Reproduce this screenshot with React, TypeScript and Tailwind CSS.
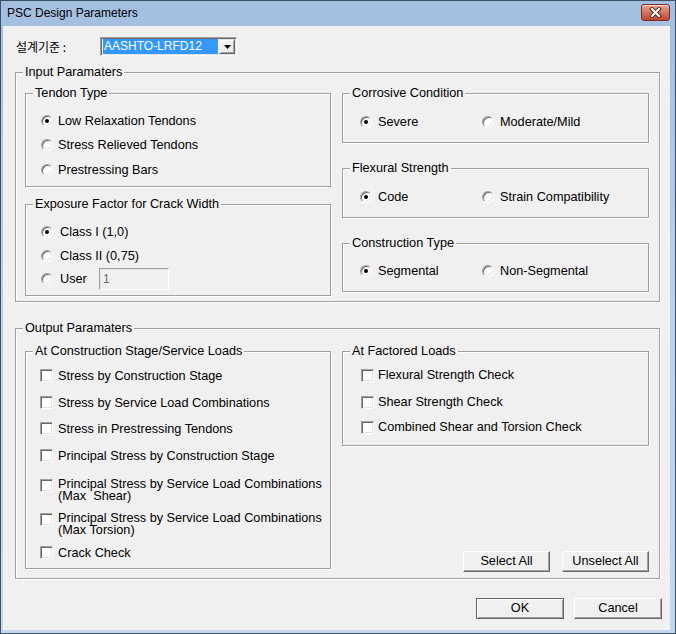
import React from 'react';

function Radio({ checked = false }: { checked?: boolean }) {
  return (
    <div className="w-[12px] h-[12px] shrink-0 rounded-full border border-t-[#a0a0a0] border-l-[#a0a0a0] border-r-white border-b-white bg-white shadow-[inset_1px_1px_0_#696969,inset_-1px_-1px_0_#e3e3e3] flex items-center justify-center">
      {checked && <div className="w-[4px] h-[4px] rounded-full bg-black" />}
    </div>
  );
}

function Check() {
  return (
    <div className="w-[13px] h-[13px] shrink-0 border border-t-[#a0a0a0] border-l-[#a0a0a0] border-r-white border-b-white bg-white shadow-[inset_1px_1px_0_#696969,inset_-1px_-1px_0_#e3e3e3]" />
  );
}

function Group({ label, className = '', children }: { label: string; className?: string; children?: React.ReactNode }) {
  return (
    <div className={`border border-[#a0a0a0] shadow-[inset_1px_1px_0_#fff,1px_1px_0_#fff] ${className}`}>
      <div className="-mt-[8px] ml-[7px] w-fit px-[2px] leading-[14px] bg-[#f0f0f0]">{label}</div>
      {children}
    </div>
  );
}

function Btn({ label, width, primary = false, className = '' }: { label: string; width: string; primary?: boolean; className?: string }) {
  return (
    <div
      className={`${width} h-[21px] flex items-center justify-center bg-[#f0f0f0] leading-none ${
        primary
          ? 'border border-[#646464] shadow-[inset_1px_1px_0_#fff,inset_-1px_-1px_0_#a0a0a0]'
          : 'border border-t-white border-l-white border-r-[#696969] border-b-[#696969] shadow-[inset_-1px_-1px_0_#a0a0a0]'
      } ${className}`}
    >
      {label}
    </div>
  );
}

const tendons = [
  { label: 'Low Relaxation Tendons', on: true, mt: 'mt-[13px]' },
  { label: 'Stress Relieved Tendons', on: false, mt: 'mt-[8px]' },
  { label: 'Prestressing Bars', on: false, mt: 'mt-[9px]' },
];

const pairs = [
  { title: 'Corrosive Condition', a: 'Severe', b: 'Moderate/Mild', box: 'h-[50px]', mt: 'mt-[14px]' },
  { title: 'Flexural Strength', a: 'Code', b: 'Strain Compatibility', box: 'mt-[25px] h-[50px]', mt: 'mt-[14px]' },
  { title: 'Construction Type', a: 'Segmental', b: 'Non-Segmental', box: 'mt-[25px] h-[49px]', mt: 'mt-[13px]' },
];

const stageChecks = [
  { lines: ['Stress by Construction Stage'], mt: 'mt-[10px]' },
  { lines: ['Stress by Service Load Combinations'], mt: 'mt-[11px]' },
  { lines: ['Stress in Prestressing Tendons'], mt: 'mt-[10px]' },
  { lines: ['Principal Stress by Construction Stage'], mt: 'mt-[11px]' },
  { lines: ['Principal Stress by Service Load Combinations', '(Max  Shear)'], mt: 'mt-[14px]' },
  { lines: ['Principal Stress by Service Load Combinations', '(Max Torsion)'], mt: 'mt-[10px]' },
  { lines: ['Crack Check'], mt: 'mt-[9px]' },
];

const factoredChecks = [
  { label: 'Flexural Strength Check', mt: 'mt-[9px]' },
  { label: 'Shear Strength Check', mt: 'mt-[11px]' },
  { label: 'Combined Shear and Torsion Check', mt: 'mt-[9px]' },
];

export default function App() {
  return (
    <div className="w-[676px] h-[634px] flex flex-col border border-[#3d4f66] bg-gradient-to-b from-[#a3bedf] via-[#bcd2ec] to-[#c3d7ee] font-['Liberation_Sans',Arial,sans-serif] text-black">
      {/* Title bar */}
      <div className="h-[25px] shrink-0 flex items-start justify-between pl-[6px] pr-[5px]">
        <span className="mt-[5px] text-[12px] leading-[15px]">PSC Design Parameters</span>
        <div className="mt-[3px] w-[29px] h-[17px] rounded-[3px] border border-[#7a3027] bg-gradient-to-b from-[#e9a897] via-[#d27660] to-[#c0452e] shadow-[inset_0_1px_0_rgba(255,255,255,0.5)] flex items-center justify-center">
          <svg width="13" height="11" viewBox="0 0 13 11">
            <path d="M3 2 L10 9 M10 2 L3 9" stroke="#5a2a24" strokeWidth="4" strokeLinecap="square" />
            <path d="M3 2 L10 9 M10 2 L3 9" stroke="#ffffff" strokeWidth="2" strokeLinecap="square" />
          </svg>
        </div>
      </div>

      {/* Client */}
      <div className="flex-1 ml-[2px] mr-[5px] mb-[3px] bg-[#f0f0f0] text-[12.7px] leading-[16px] flex flex-col">
        <div className="flex items-center mt-[11px] ml-[13px] h-[19px]">
          <span className="w-[84px] font-['Noto_Sans_CJK_KR',sans-serif] text-[12px]">설계기준 :</span>
          <div className="w-[137px] h-[19px] flex border border-t-[#a0a0a0] border-l-[#a0a0a0] border-r-white border-b-white bg-white shadow-[inset_1px_1px_0_#696969,inset_-1px_-1px_0_#e3e3e3] p-[1px] pl-[2px]">
            <div className="flex-1 mr-[1px] bg-[#3399ff] text-white text-[12px] leading-[15px] pl-[1px]">AASHTO-LRFD12</div>
            <div className="w-[16px] h-[15px] bg-[#f0f0f0] border border-t-[#e3e3e3] border-l-[#e3e3e3] border-r-[#696969] border-b-[#696969] shadow-[inset_1px_1px_0_#fff,inset_-1px_-1px_0_#a0a0a0] flex items-center justify-center">
              <svg width="7" height="4" viewBox="0 0 7 4">
                <path d="M0 0 H7 L3.5 4 Z" fill="#000" />
              </svg>
            </div>
          </div>
        </div>

        {/* Input */}
        <Group label="Input Paramaters" className="mt-[16px] ml-[12px] w-[645px] h-[230px]">
          <div className="flex mt-[14px] ml-[9px] gap-[11px]">
            <div className="flex flex-col">
              <Group label="Tendon Type" className="w-[306px] h-[94px]">
                {tendons.map(t => (
                  <div key={t.label} className={`flex items-center h-[16px] gap-[5px] pl-[15px] ${t.mt}`}>
                    <Radio checked={t.on} />
                    <span>{t.label}</span>
                  </div>
                ))}
              </Group>
              <Group label="Exposure Factor for Crack Width" className="mt-[17px] w-[306px] h-[92px]">
                <div className="flex items-center h-[16px] gap-[7px] pl-[15px] mt-[13px]">
                  <Radio checked />
                  <span>Class I (1,0)</span>
                </div>
                <div className="flex items-center h-[16px] gap-[7px] pl-[15px] mt-[8px]">
                  <Radio />
                  <span>Class II (0,75)</span>
                </div>
                <div className="flex items-center h-[16px] pl-[15px] mt-[7px]">
                  <Radio />
                  <span className="w-[46px] pl-[7px]">User</span>
                  <div className="w-[70px] h-[22px] shrink-0 border border-t-[#a0a0a0] border-l-[#a0a0a0] border-r-white border-b-white shadow-[inset_1px_1px_0_#e3e3e3] pl-[3px] pt-[2px] text-[#6d6d6d] text-[12px]">
                    1
                  </div>
                </div>
              </Group>
            </div>
            <div className="flex flex-col">
              {pairs.map(p => (
                <Group key={p.title} label={p.title} className={`w-[307px] ${p.box}`}>
                  <div className={`flex items-center h-[16px] pl-[17px] ${p.mt}`}>
                    <div className="w-[122px] flex items-center gap-[6px]">
                      <Radio checked />
                      <span>{p.a}</span>
                    </div>
                    <div className="flex items-center gap-[6px]">
                      <Radio />
                      <span>{p.b}</span>
                    </div>
                  </div>
                </Group>
              ))}
            </div>
          </div>
        </Group>

        {/* Output */}
        <Group label="Output Paramaters" className="mt-[26px] ml-[12px] w-[645px] h-[251px]">
          <div className="flex mt-[16px] ml-[9px] gap-[11px]">
            <Group label="At Construction Stage/Service Loads" className="w-[306px] h-[218px]">
              {stageChecks.map((c, i) => (
                <div key={i} className={`flex items-start gap-[5px] pl-[14px] ${c.mt}`}>
                  <div className="mt-[1px]">
                    <Check />
                  </div>
                  <div className={c.lines.length > 1 ? 'leading-[12px]' : 'leading-[16px]'}>
                    {c.lines.map(l => (
                      <div key={l} className="whitespace-pre">{l}</div>
                    ))}
                  </div>
                </div>
              ))}
            </Group>
            <div className="flex flex-col">
              <Group label="At Factored Loads" className="w-[307px] h-[95px]">
                {factoredChecks.map(c => (
                  <div key={c.label} className={`flex items-center h-[16px] gap-[4px] pl-[18px] ${c.mt}`}>
                    <Check />
                    <span>{c.label}</span>
                  </div>
                ))}
              </Group>
              <div className="flex justify-end gap-[12px] mt-[105px]">
                <Btn label="Select All" width="w-[87px]" />
                <Btn label="Unselect All" width="w-[87px]" />
              </div>
            </div>
          </div>
        </Group>

        <div className="flex justify-end gap-[10px] pr-[8px] mt-[19px]">
          <Btn label="OK" width="w-[88px]" primary />
          <Btn label="Cancel" width="w-[88px]" />
        </div>
      </div>
    </div>
  );
}
